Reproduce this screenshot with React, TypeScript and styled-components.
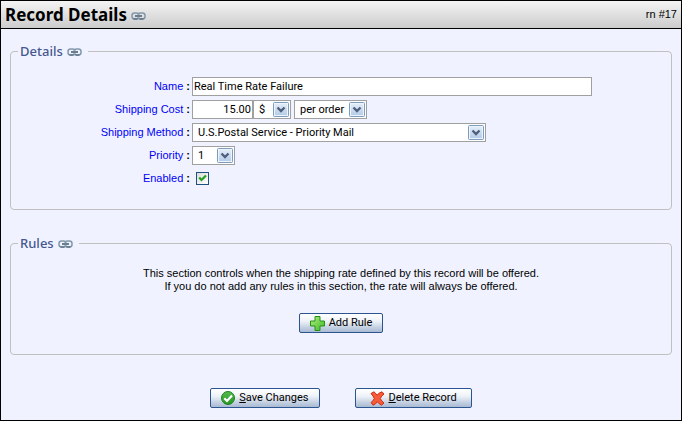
import React from 'react';
import type { ReactNode } from 'react';
import styled, { createGlobalStyle } from 'styled-components';

const GlobalStyle = createGlobalStyle`
  * { box-sizing: border-box; }
  body { margin: 0; background: #f0f3ff; }
  #root { min-height: 100vh; display: flex; }
`;

const Page = styled.main`
  flex: 1;
  border: 1px solid #000;
  background: #f0f3ff;
  color: #000;
  font: 11px/13px 'Liberation Sans', Arial, sans-serif;
`;

const Header = styled.header`
  display: flex;
  align-items: center;
  justify-content: space-between;
  height: 28px;
  padding: 0 4px;
  border-bottom: 1px solid #000;
  background: linear-gradient(#f4f4f4, #cccccc);
`;

const Title = styled.h1`
  display: flex;
  align-items: center;
  gap: 4px;
  margin: 0;
  font: bold 17px/20px 'Noto Sans', sans-serif;
`;

const Content = styled.form`
  padding: 14px 9px 12px;
`;

const Section = styled.fieldset`
  min-width: 0;
  margin: 0 0 25px;
  padding: 16px 0 21px;
  border: 1px solid #c0c0c0;
  border-radius: 4px;
`;

const Legend = styled.legend`
  margin-left: 7px;
  padding: 0 6px 0 2px;
  color: #46578f;
  font: 500 13px/16px 'Noto Sans', sans-serif;
`;

const LegendContent = styled.span`
  display: flex;
  align-items: center;
  gap: 4px;
`;

const IconLink = styled.a`
  display: flex;
  margin-top: 2px;
`;

const Fields = styled.div`
  display: grid;
  row-gap: 4px;
  padding-top: 2px;
`;

const Row = styled.div`
  display: grid;
  grid-template-columns: 179px 1fr;
  column-gap: 2px;
  align-items: center;
  height: 19px;
`;

const Label = styled.label`
  text-align: right;
  color: #0000f8;
`;

const Colon = styled.span`
  color: #000;
  font-weight: bold;
`;

const Controls = styled.div`
  display: flex;
  align-items: center;
`;

const TextInput = styled.input<{ $width: number; $align?: 'left' | 'right' }>`
  width: ${(p) => p.$width}px;
  height: 19px;
  padding: 0 1px;
  border: 1px solid #a0a0a0;
  border-radius: 0;
  background: #fff;
  color: #000;
  font: 11px/16px Roboto, Arial, sans-serif;
  text-align: ${(p) => p.$align ?? 'left'};
`;

const SelectFrame = styled.div<{ $width: number; $gap?: number }>`
  display: grid;
  width: ${(p) => p.$width}px;
  height: 19px;
  margin-left: ${(p) => p.$gap ?? 0}px;
  border: 1px solid #a0a0a0;
  background: #fff;

  > * { grid-area: 1 / 1; }
`;

const Select = styled.select`
  appearance: none;
  width: 100%;
  padding: 0 18px 0 5px;
  border: 0;
  background: transparent;
  color: #000;
  font: 11px/16px Roboto, Arial, sans-serif;
`;

const Arrow = styled.svg`
  justify-self: end;
  align-self: center;
  pointer-events: none;
`;

const CheckFrame = styled.span`
  display: grid;
  margin-left: 4px;

  > * { grid-area: 1 / 1; }
`;

const Checkbox = styled.input`
  appearance: none;
  width: 13px;
  height: 13px;
  margin: 0;
  border: 1px solid #1c5180;
  background: linear-gradient(135deg, #dcdcd7, #ffffff);

  &:not(:checked) + svg { visibility: hidden; }
`;

const CheckMark = styled.svg`
  pointer-events: none;
`;

const Notice = styled.p`
  margin: 0 0 20px;
  text-align: center;
`;

const ButtonBar = styled.div`
  display: flex;
  justify-content: center;
  gap: 35px;
`;

const FormActions = styled(ButtonBar)`
  padding-top: 8px;
`;

const Button = styled.button<{ $pad?: number }>`
  display: flex;
  align-items: center;
  justify-content: center;
  gap: 4px;
  height: 20px;
  padding: 0 ${(p) => p.$pad ?? 10}px;
  border: 1px solid #2a5590;
  border-radius: 2px;
  background: linear-gradient(#ffffff 0%, #eef2f8 40%, #c3d0e2 75%, #a9bad2 100%);
  color: #000;
  font: 11px/16px Roboto, Arial, sans-serif;
`;

const ChainLink = ({ label }: { label: string }) => (
  <IconLink href="#" aria-label={label}>
    <svg width="15" height="8" viewBox="0 0 15 8" fill="none">
      <rect x="1" y="1" width="7" height="6" rx="2.5" stroke="#8298aa" strokeWidth="1.5" />
      <rect x="7" y="1" width="7" height="6" rx="2.5" stroke="#8298aa" strokeWidth="1.5" />
      <path d="M2.5 7H6.5M8.5 7H12.5" stroke="#3f586d" />
      <path d="M4 4H11" stroke="#dfe8f0" strokeWidth="2.4" />
      <path d="M4 4H11" stroke="#2c455e" strokeWidth="1.3" />
    </svg>
  </IconLink>
);

type DropdownProps = { id: string; label?: string; width: number; gap?: number; options: string[] };

const Dropdown = ({ id, label, width, gap, options }: DropdownProps) => (
  <SelectFrame $width={width} $gap={gap}>
    <Select id={id} aria-label={label}>
      {options.map((option) => <option key={option}>{option}</option>)}
    </Select>
    <Arrow width="17" height="17" viewBox="0 0 17 17">
      <defs>
        <linearGradient id={`${id}-face`} x1="0" y1="0" x2="0" y2="1">
          <stop offset="0" stopColor="#e8f0fa" />
          <stop offset="1" stopColor="#b0c8e6" />
        </linearGradient>
      </defs>
      <rect x="0.5" y="1.5" width="15" height="14" rx="1" fill={`url(#${id}-face)`} stroke="#7d9dbf" />
      <rect x="1.5" y="2.5" width="13" height="12" fill="none" stroke="#edf4fc" />
      <path d="M4.5 6.5L8 10L11.5 6.5" fill="none" stroke="#4d5f7c" strokeWidth="2.4" />
    </Arrow>
  </SelectFrame>
);

const Field = ({ id, label, children }: { id: string; label: string; children: ReactNode }) => (
  <Row>
    <Label htmlFor={id}>{label} <Colon>:</Colon></Label>
    <Controls>{children}</Controls>
  </Row>
);

const PlusIcon = () => (
  <svg width="15" height="15" viewBox="0 0 15 15">
    <defs>
      <linearGradient id="plus" x1="0" y1="0" x2="1" y2="1">
        <stop offset="0" stopColor="#b4f080" />
        <stop offset="1" stopColor="#3cb828" />
      </linearGradient>
    </defs>
    <path d="M5 .5h5v4.500h4.500v5H10v4.500H5V10H.5V5H5z" fill="url(#plus)" stroke="#259018" />
  </svg>
);

const TickIcon = () => (
  <svg width="14" height="14" viewBox="0 0 14 14">
    <defs>
      <linearGradient id="tick" x1="0" y1="0" x2="0" y2="1">
        <stop offset="0" stopColor="#55bb50" />
        <stop offset="1" stopColor="#259620" />
      </linearGradient>
    </defs>
    <circle cx="7" cy="7" r="6.5" fill="url(#tick)" stroke="#208020" />
    <path d="M3.3 7.3L6 10L11 4.5" fill="none" stroke="#fff" strokeWidth="2.2" />
  </svg>
);

const CrossIcon = () => (
  <svg width="15" height="15" viewBox="0 0 15 15">
    <path
      d="M1 2.5L4 .8Q5.8 2.3 7 4.2Q9 1.6 12 .8L14 3Q11.5 5 10.2 7.5Q11.5 10 14 12L11.5 14.2Q9 13 7.3 10.8Q5.5 13.5 3 14.2L1 11.5Q3.3 10 4.3 7.5Q3.3 5 1 2.5Z"
      fill="#f65a38"
      stroke="#c83018"
    />
  </svg>
);

export default function App() {
  return (
    <>
      <GlobalStyle />
      <Page>
        <Header>
          <Title>Record Details <ChainLink label="Link to record details" /></Title>
          <span>rn #17</span>
        </Header>
        <Content onSubmit={(event) => event.preventDefault()}>
          <Section>
            <Legend><LegendContent>Details <ChainLink label="Link to details" /></LegendContent></Legend>
            <Fields>
              <Field id="name" label="Name">
                <TextInput id="name" $width={400} defaultValue="Real Time Rate Failure" />
              </Field>
              <Field id="cost" label="Shipping Cost">
                <TextInput id="cost" $width={61} $align="right" defaultValue="15.00" />
                <Dropdown id="unit" label="Cost unit" width={38} options={['$', '%']} />
                <Dropdown id="basis" label="Cost basis" width={73} gap={3} options={['per order', 'per item']} />
              </Field>
              <Field id="method" label="Shipping Method">
                <Dropdown id="method" width={294} options={['U.S.Postal Service - Priority Mail']} />
              </Field>
              <Field id="priority" label="Priority">
                <Dropdown id="priority" width={43} options={['1', '2', '3']} />
              </Field>
              <Field id="enabled" label="Enabled">
                <CheckFrame>
                  <Checkbox id="enabled" type="checkbox" defaultChecked />
                  <CheckMark width="13" height="13" viewBox="0 0 13 13">
                    <path d="M3.2 5.5L5.5 8L10 3.5" fill="none" stroke="#21a121" strokeWidth="2.2" />
                  </CheckMark>
                </CheckFrame>
              </Field>
            </Fields>
          </Section>
          <Section>
            <Legend><LegendContent>Rules <ChainLink label="Link to rules" /></LegendContent></Legend>
            <Notice>
              This section controls when the shipping rate defined by this record will be offered.
              <br />
              If you do not add any rules in this section, the rate will always be offered.
            </Notice>
            <ButtonBar>
              <Button type="button"><PlusIcon />Add Rule</Button>
            </ButtonBar>
          </Section>
          <FormActions>
            <Button type="submit"><TickIcon /><span><u>S</u>ave Changes</span></Button>
            <Button type="button" $pad={14}><CrossIcon /><span><u>D</u>elete Record</span></Button>
          </FormActions>
        </Content>
      </Page>
    </>
  );
}
